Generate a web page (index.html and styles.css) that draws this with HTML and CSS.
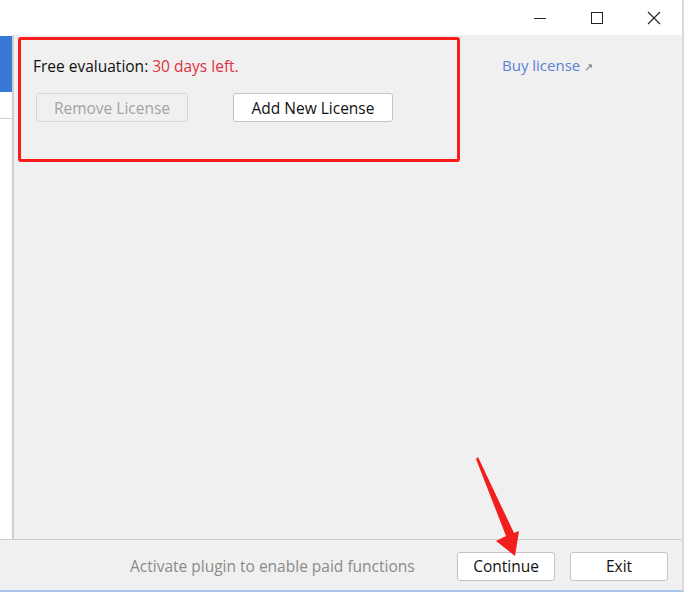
FILE: index.html
```html
<!DOCTYPE html>
<html>
<head>
<meta charset="utf-8">
<link rel="stylesheet" href="styles.css">
</head>
<body>
<div class="window">
  <div class="titlebar">
    <div class="winbtn">
      <svg width="14" height="14" viewBox="0 0 14 14"><line x1="1" y1="7.5" x2="13" y2="7.5" stroke="#222" stroke-width="1"/></svg>
    </div>
    <div class="winbtn">
      <svg width="14" height="14" viewBox="0 0 14 14"><rect x="1.5" y="1.5" width="11" height="11" fill="none" stroke="#222" stroke-width="1"/></svg>
    </div>
    <div class="winbtn">
      <svg width="14" height="14" viewBox="0 0 14 14"><path d="M1 1 L13 13 M13 1 L1 13" stroke="#222" stroke-width="1.1"/></svg>
    </div>
  </div>
  <div class="body">
    <div class="sidebar">
      <div class="side-active"></div>
      <div class="side-item"></div>
    </div>
    <div class="main">
      <div class="license-box">
        <div class="eval">Free evaluation: <span class="days">30 days left.</span></div>
        <div class="btn-row">
          <button class="btn disabled">Remove License</button>
          <button class="btn">Add New License</button>
        </div>
      </div>
      <a class="buy">Buy license <span class="ext">&#8599;</span></a>
    </div>
  </div>
  <div class="footer">
    <span class="hint">Activate plugin to enable paid functions</span>
    <button class="btn fbtn">Continue</button>
    <button class="btn fbtn">Exit</button>
  </div>
  <svg class="arrow" width="60" height="110" viewBox="0 0 60 110">
    <polygon points="6,9 8,7 44,83 49,81 45,106 26,91 36,86" fill="#f21d1d"/>
  </svg>
</div>
</body>
</html>
```
FILE: styles.css
```css
* { box-sizing: border-box; }
html, body { margin: 0; padding: 0; }
body {
  background: #fff;
  font-family: "Open Sans", "Noto Sans", sans-serif;
  font-size: 15.5px;
  color: #1a1a1a;
}
.window {
  position: relative;
  width: 684px;
  height: 592px;
  display: flex;
  flex-direction: column;
  border-right: 2px solid #dadada;
  border-bottom: 2px solid #a9c8ec;
  overflow: hidden;
}
.titlebar {
  height: 35px;
  background: #fff;
  display: flex;
  justify-content: flex-end;
  align-items: center;
}
.winbtn {
  width: 57px;
  height: 32px;
  display: flex;
  align-items: center;
  justify-content: center;
}
.body {
  flex: 1;
  display: flex;
  background: #f0f0f0;
}
.sidebar {
  width: 14px;
  background: #fff;
  border-right: 2px solid #cfcfcf;
  padding-top: 1px;
}
.side-active {
  height: 56px;
  background: #3a78d6;
}
.side-item {
  height: 27px;
  border-bottom: 1px solid #cfcfcf;
}
.main {
  flex: 1;
  display: flex;
  align-items: flex-start;
  padding: 2px 0 0 4px;
}
.license-box {
  width: 442px;
  height: 125px;
  border: 3px solid #fb1b1b;
  border-radius: 3px;
  padding: 16px 0 0 12px;
}
.eval {
  line-height: 20px;
  color: #111;
}
.days { color: #e0303e; }
.btn-row {
  display: flex;
  gap: 45px;
  margin-top: 17px;
  padding-left: 3px;
}
.btn {
  font-family: "Open Sans", "Noto Sans", sans-serif;
  font-size: 15.5px;
  height: 29px;
  background: #fff;
  border: 1px solid #c4c4c4;
  border-radius: 3px;
  color: #111;
  padding: 0;
}
.btn-row .btn:first-child { width: 152px; }
.btn-row .btn:last-child { width: 160px; }
.btn.disabled {
  background: #f0f0f0;
  border-color: #d6d6d6;
  color: #a3a3a3;
}
.buy {
  margin: 18px 0 0 42px;
  color: #5a7fd6;
  line-height: 20px;
  font-size: 15px;
}
.ext { color: #777; font-size: 11px; }
.footer {
  height: 51px;
  border-top: 1px solid #cdcdcd;
  background: #f0f0f0;
  display: flex;
  align-items: center;
  padding: 2px 14px 0 130px;
}
.hint {
  color: #8a8a8a;
  margin-right: auto;
}
.fbtn {
  width: 98px;
  height: 29px;
  margin-left: 15px;
}
.arrow {
  position: absolute;
  left: 470px;
  top: 450px;
}
```
